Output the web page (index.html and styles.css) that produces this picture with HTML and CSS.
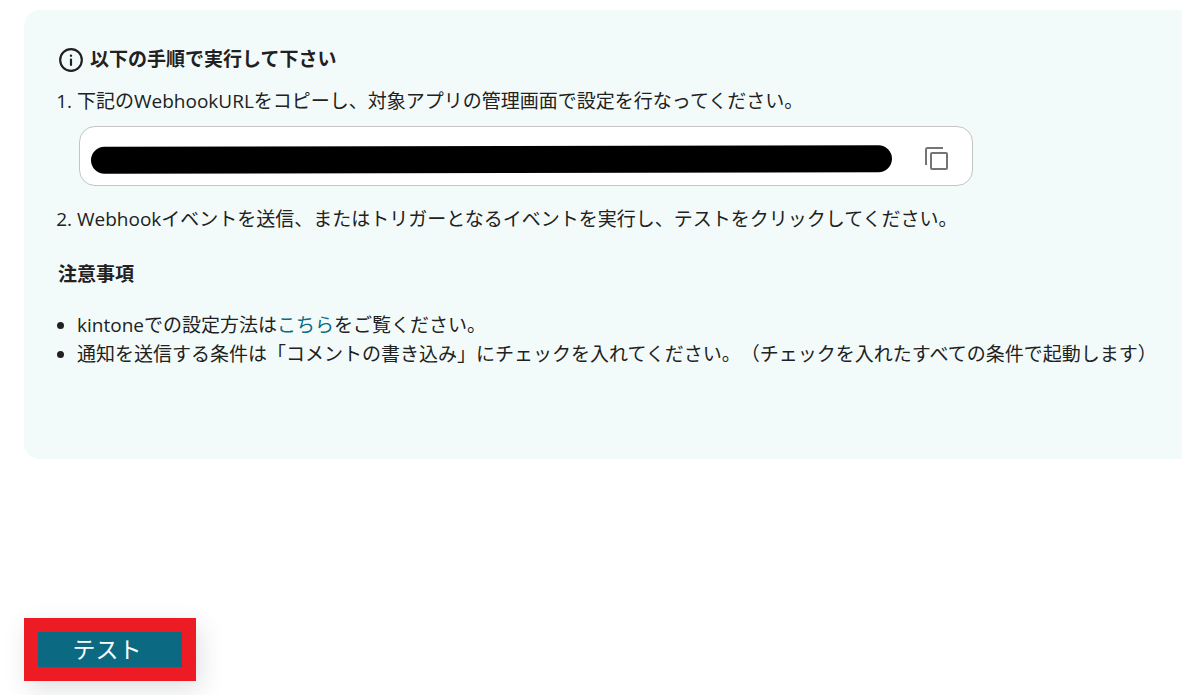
FILE: index.html
```
<!DOCTYPE html>
<html lang="ja">
<head>
  <meta charset="UTF-8" />
  <meta name="viewport" content="width=device-width, initial-scale=1.0"/>
  <title>Webhook テスト</title>
  <link rel="stylesheet" href="styles.css">
</head>
<body>
  <section class="guide">
    <h2 class="guide-title">
      <svg class="info-icon" viewBox="0 0 24 24" aria-hidden="true">
        <circle cx="12" cy="12" r="10" fill="none" stroke="currentColor" stroke-width="2"/>
        <path d="M12 11.5v5" stroke="currentColor" stroke-width="2" stroke-linecap="round"/>
        <circle cx="12" cy="8" r="1.1" fill="currentColor"/>
      </svg>
      以下の手順で実行して下さい
    </h2>

    <ol class="steps">
      <li>
        下記のWebhookURLをコピーし、対象アプリの管理画面で設定を行なってください。
        <div class="url-box">
          <div class="url-mask"></div>
          <button class="copy-btn" type="button" aria-label="コピー">
            <svg viewBox="0 0 24 24" aria-hidden="true">
              <path d="M1 18V2.500Q1 1 2.500 1H18" fill="none" stroke="currentColor" stroke-width="2"/>
              <rect x="6" y="6" width="16" height="16" rx="1" fill="none" stroke="currentColor" stroke-width="2"/>
            </svg>
          </button>
        </div>
      </li>
      <li>Webhookイベントを送信、またはトリガーとなるイベントを実行し、テストをクリックしてください。</li>
    </ol>

    <h3 class="notes-title">注意事項</h3>
    <ul class="notes">
      <li>kintoneでの設定方法は<a href="#">こちら</a>をご覧ください。</li>
      <li>通知を送信する条件は「コメントの書き込み」にチェックを入れてください。（チェックを入れたすべての条件で起動します）</li>
    </ul>
  </section>

  <button class="test-btn" type="button">テスト</button>
</body>
</html>
```
FILE: styles.css
```
* {
  box-sizing: border-box;
}

body {
  margin: 0;
  padding: 10px 0 14px 24px;
  background: #fff;
  color: #212121;
  font-family: "Open Sans", "Noto Sans CJK JP", sans-serif;
  font-size: 19px;
  line-height: 29px;
  text-spacing-trim: space-all;
}

.guide {
  padding: 35px 0 90px 34px;
  background: #f2fbfa;
  border-radius: 16px 0 0 16px;
}

.guide-title,
.notes-title {
  margin: 0;
  font-size: 19px;
  font-weight: 700;
}

.guide-title {
  display: flex;
  align-items: center;
  gap: 6px;
  margin-bottom: 13px;
}

.info-icon {
  width: 26px;
  height: 26px;
}

.steps,
.notes {
  margin: 0;
  padding-left: 19px;
}

.url-box {
  display: flex;
  align-items: center;
  gap: 28px;
  max-width: 894px;
  height: 60px;
  margin: 10px 0 19px 2px;
  padding: 6px 18px 0 11px;
  background: #fff;
  border: 1px solid #c4c4c4;
  border-radius: 16px;
}

/* hides the webhook address */
.url-mask {
  flex: 1;
  height: 27px;
  background: #000;
  border-radius: 14px;
  transform: rotate(-0.1deg);
}

.copy-btn {
  display: flex;
  padding: 5px;
  background: none;
  border: none;
  color: #757575;
  cursor: pointer;
}

.copy-btn svg {
  width: 24px;
  height: 24px;
}

.notes-title {
  margin: 26px 0 22px;
}

.notes a {
  color: #0b6a82;
  text-decoration: none;
}

.test-btn {
  display: block;
  width: 172px;
  height: 63px;
  margin-top: 159px;
  padding: 0 6px 2px 0;
  background: #0b6a82;
  border: 14px solid #ed1c24;
  box-shadow: 4px 8px 24px rgba(33, 50, 60, 0.15);
  color: #fff;
  font-family: inherit;
  font-size: 23px;
  font-weight: 400;
  line-height: 30px;
  cursor: pointer;
}
```
